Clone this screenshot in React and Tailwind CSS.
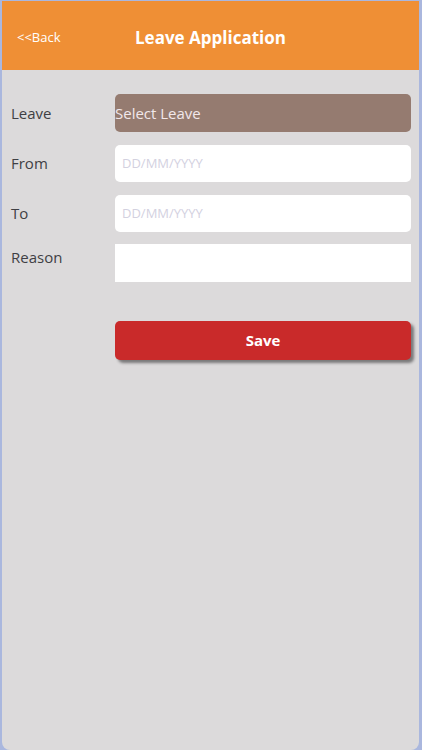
import React from 'react';

const Field = ({ label, children, top }) => (
  <div className={`flex ${top ? 'items-start' : 'items-center'}`}>
    <span className={`w-[104px] shrink-0 text-[15px] text-[#3f3f44] ${top ? 'mt-[2px]' : ''}`}>{label}</span>
    {children}
  </div>
);

const App = () => {
  return (
    <div
      className="h-[750px] w-[422px] bg-[#aab7de] pl-[2px] pr-[3px] pt-[1px]"
      style={{ fontFamily: '"Open Sans", "Liberation Sans", sans-serif' }}
    >
      <div className="flex h-full flex-col overflow-hidden rounded-b-[8px] bg-[#dcdadb]">
        <div className="relative flex h-[69px] items-center bg-[#ef8f35] pt-[5px]">
          <span className="pl-[15px] text-[13px] text-white">&lt;&lt;Back</span>
          <h1 className="absolute inset-x-0 text-center text-[17px] font-bold text-white">
            Leave Application
          </h1>
        </div>

        <div className="flex flex-col pl-[9px] pr-[8px] pt-[24px]">
          <Field label="Leave">
            <div className="flex h-[38px] flex-1 items-center rounded-[5px] bg-[#957b70] text-[15px] text-[#f1e7ea]">
              Select Leave
            </div>
          </Field>
          <div className="mt-[13px]">
            <Field label="From">
              <div className="flex h-[37px] flex-1 items-center rounded-[5px] bg-white pl-[7px] text-[13px] text-[#d3d1df]">
                DD/MM/YYYY
              </div>
            </Field>
          </div>
          <div className="mt-[13px]">
            <Field label="To">
              <div className="flex h-[37px] flex-1 items-center rounded-[5px] bg-white pl-[7px] text-[13px] text-[#d3d1df]">
                DD/MM/YYYY
              </div>
            </Field>
          </div>
          <div className="mt-[12px]">
            <Field label="Reason" top>
              <div className="h-[38px] flex-1 bg-white" />
            </Field>
          </div>
          <div className="mt-[39px] flex">
            <div className="w-[104px] shrink-0" />
            <button className="h-[39px] flex-1 rounded-[5px] bg-[#c92a2a] text-[15px] font-bold text-white shadow-[3px_3px_3px_rgba(0,0,0,0.45)]">
              Save
            </button>
          </div>
        </div>
      </div>
    </div>
  );
};

export default App;
